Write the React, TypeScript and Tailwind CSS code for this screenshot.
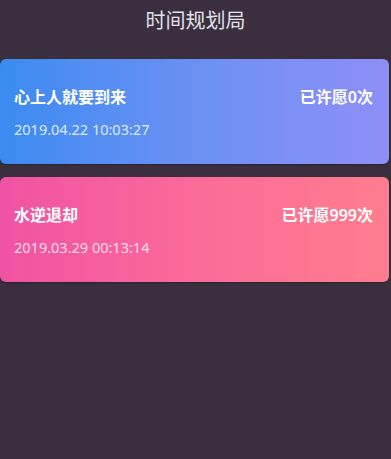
export default function App() {
  const wishes = [
    {
      title: '心上人就要到来',
      time: '2019.04.22 10:03:27',
      count: 0,
      bg: 'bg-gradient-to-r from-[#3a8bf0] via-[#6a90f4] to-[#8e8ff6]',
      sub: 'text-[#dbe9ff]',
    },
    {
      title: '水逆退却',
      time: '2019.03.29 00:13:14',
      count: 999,
      bg: 'bg-gradient-to-r from-[#f052a4] via-[#fc6a98] to-[#ff7d8e]',
      sub: 'text-[#ffdcec]',
    },
  ];

  return (
    <div
      className="w-[391px] h-[459px] bg-[#3b2f3f] overflow-hidden"
      style={{ fontFamily: '"Noto Sans", "Noto Sans CJK SC", sans-serif' }}
    >
      <div className="h-[42px] flex items-center justify-center text-[20px] text-[#e4e0e8]">
        时间规划局
      </div>
      <div className="flex flex-col gap-[13px] mt-[17px]">
        {wishes.map((w) => (
          <div
            key={w.title}
            className={`w-[389px] h-[105px] rounded-[6px] ${w.bg} px-[14px] pt-[27px] shadow-[0_1px_2px_rgba(0,0,0,0.3)]`}
          >
            <div className="flex items-center justify-between">
              <span className="text-[16px] font-semibold text-white leading-[22px]">{w.title}</span>
              <span className="text-[16px] font-semibold text-white leading-[22px] mr-[2px]">
                已许愿{w.count}次
              </span>
            </div>
            <div className={`mt-[11px] text-[14.5px] leading-[20px] ${w.sub}`}>{w.time}</div>
          </div>
        ))}
      </div>
    </div>
  );
}
